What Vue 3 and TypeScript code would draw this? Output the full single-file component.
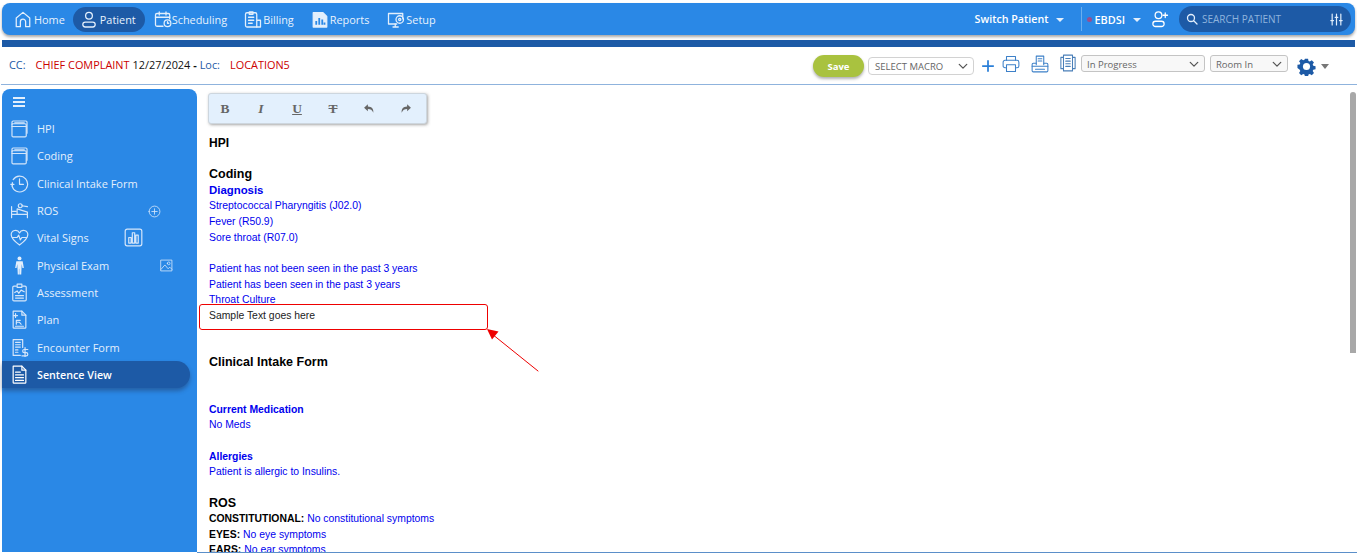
<script setup lang="ts">
type Icon = string[];
const circle = (x: number, y: number, r: number) =>
  `M${x - r} ${y}a${r} ${r} 0 1 0 ${2 * r} 0a${r} ${r} 0 1 0 ${-2 * r} 0z`;

const navItems: { label: string; icon: Icon; active?: boolean }[] = [
  { label: "Home", icon: ["M3 21.5V10l9-7.5 9 7.5v11.5h-5.5V15a3.5 3.5 0 0 0-7 0v6.500z"] },
  { label: "Patient", active: true, icon: [circle(12, 7, 4.5), "M7 15.500h10a3.200 3.200 0 0 1 0 6.500H7a3.200 3.200 0 0 1 0-6.500z"] },
  { label: "Scheduling", icon: ["M21 11V6a2 2 0 0 0-2-2H4a2 2 0 0 0-2 2v13a2 2 0 0 0 2 2h8", "M2 9h19", "M7 2v4M16 2v4", circle(18, 17, 4.500), "M18 15v2h1.800"] },
  { label: "Billing", icon: ["M17 12V5a2 2 0 0 0-2-2H4a2 2 0 0 0-2 2v15a2 2 0 0 0 2 2h13", "M7 2h5v3H7z", "M6 9h7M6 13h7M6 17h5", "M17 13h5v9h-5z"] },
  { label: "Reports", icon: ["M3 3h13l5 5v14H3z", "M7 19v-5M11 19V10M15 19v-7M18 19v-3"] },
  { label: "Setup", icon: ["M21 11V4H2v14h11", "M8 22h7M11 18v4", circle(17, 12, 5), circle(17, 12, 1.500)] },
];

const windowIcon: Icon = ["M3 6h16a1.500 1.500 0 0 1 1.500 1.500V21a1.500 1.500 0 0 1-1.500 1.500H4A1.500 1.500 0 0 1 2.500 21V7", "M2.500 7V4A1.500 1.500 0 0 1 4 2.500h16A1.500 1.500 0 0 1 21.500 4v14", "M2.500 9.500h18", "M6 5h12"];

const sideItems: { label: string; icon: Icon; extra?: string; active?: boolean }[] = [
  { label: "HPI", icon: windowIcon },
  { label: "Coding", icon: windowIcon },
  { label: "Clinical Intake Form", icon: ["M4 7a10 10 0 1 1-1.500 8", "M12 6v7h5", "M1 13h4M3 11v4"] },
  { label: "ROS", extra: "ros", icon: ["M2 7v14M2 17h20v4M22 17v-3L9 10v7", "M3 13h5", circle(13, 6, 2.500), "M15 6l7 1"] },
  { label: "Vital Signs", extra: "vital", icon: ["M12 21.500C6 17 1.500 13 1.500 8.500a5.500 5.500 0 0 1 10.500-2.300 5.500 5.500 0 0 1 10.500 2.300C22.500 13 18 17 12 21.500z", "M3 12h6l2-3 2 6 2-3h6"] },
  { label: "Physical Exam", extra: "exam", icon: [circle(12, 3, 2.500), "M8 6.500h8l1.500 8.500-1.800 0-.9-5-.6 13.500h-2.500v-7.500h-.4v7.500H9.800L9.200 10l-.9 5-1.800 0z"] },
  { label: "Assessment", icon: ["M8 4H5a1.500 1.500 0 0 0-1.500 1.500V21A1.500 1.500 0 0 0 5 22.500h14a1.500 1.500 0 0 0 1.500-1.500V5.500A1.500 1.500 0 0 0 19 4h-3", "M9 1.500h6v4H9z", "M6 12l3-2 2 3 3-4 4 2", "M7 16h10M7 19h10"] },
  { label: "Plan", icon: ["M4 1.500h11l5 5V22a1 1 0 0 1-1 1H5a1 1 0 0 1-1-1z", "M15 1.500v5h5", "M7 4.500v5M4.500 7h5", "M8 13h5M8 13v5M8 15.500h4l2 2.500", "M7 20.500h10"] },
  { label: "Encounter Form", icon: ["M16 12V2H4v20h9", "M7 5.500h6M7 8.500h6M7 11.500h6M7 15h3M7 18h3", "M22.500 14.500H18a1.800 1.800 0 0 0 0 4h2.500a1.800 1.800 0 0 1 0 4H15M19 12v12"] },
  { label: "Sentence View", active: true, icon: ["M4 1.500h11l5 5V22a1 1 0 0 1-1 1H5a1 1 0 0 1-1-1z", "M15 1.500v5h5", "M7 9h6M7 12.500h10M7 16h10M7 19.500h10"] },
];

type Seg = { t: string; c?: string };
type Line = { kind?: string; segs?: Seg[]; text?: string };
const lines: Line[] = [
  { kind: "h2", text: "HPI" },
  {},
  { kind: "h1", text: "Coding" },
  { kind: "sub", text: "Diagnosis" },
  { kind: "link", text: "Streptococcal Pharyngitis (J02.0)" },
  { kind: "link", text: "Fever (R50.9)" },
  { kind: "link", text: "Sore throat (R07.0)" },
  {},
  { kind: "link", text: "Patient has not been seen in the past 3 years" },
  { kind: "link", text: "Patient has been seen in the past 3 years" },
  { kind: "link", text: "Throat Culture" },
  { kind: "plain", text: "Sample Text goes here" },
  {},
  {},
  { kind: "h1", text: "Clinical Intake Form" },
  {},
  {},
  { kind: "sub-s", text: "Current Medication" },
  { kind: "link", text: "No Meds" },
  {},
  { kind: "sub-s", text: "Allergies" },
  { kind: "link", text: "Patient is allergic to Insulins." },
  {},
  { kind: "h1", text: "ROS" },
  { kind: "pair", segs: [{ t: "CONSTITUTIONAL:", c: "lbl" }, { t: " No constitutional symptoms", c: "val" }] },
  { kind: "pair", segs: [{ t: "EYES:", c: "lbl" }, { t: " No eye symptoms", c: "val" }] },
  { kind: "pair", segs: [{ t: "EARS:", c: "lbl" }, { t: " No ear symptoms", c: "val" }] },
];
</script>

<template>
  <div class="page">
    <header class="topbar">
      <nav class="nav">
        <a v-for="n in navItems" :key="n.label" class="nav-item" :class="{ active: n.active }">
          <svg class="nav-icon" viewBox="0 0 24 24"><path v-for="d in n.icon" :key="d" :d="d" /></svg>
          <span>{{ n.label }}</span>
        </a>
      </nav>
      <div class="top-right">
        <span class="switch">Switch Patient</span>
        <i class="caret switch-caret"></i>
        <i class="divider"></i>
        <i class="dot"></i>
        <span class="org">EBDSI</span>
        <i class="caret org-caret"></i>
        <svg class="add-user" viewBox="0 0 24 24">
          <path :d="circle(10, 7, 4.5)" />
          <path d="M6 15h8a3.300 3.300 0 0 1 0 7H6a3.300 3.300 0 0 1 0-7z" />
          <path d="M19 4v6M16 7h6" />
        </svg>
        <div class="search">
          <svg class="search-icon" viewBox="0 0 24 24"><path :d="circle(10, 10, 7)" /><path d="M15.500 15.500L22 22" /></svg>
          <span class="search-text">SEARCH PATIENT</span>
          <svg class="filter-icon" viewBox="0 0 24 24">
            <path d="M4 2v20M12 2v20M20 2v20" />
            <path d="M1.500 14h5M9.500 8h5M17.500 14h5" />
          </svg>
        </div>
      </div>
    </header>

    <div class="strip"></div>

    <section class="subhead">
      <div class="cc">
        <span class="cc-label">CC:</span>
        <span class="cc-red">CHIEF COMPLAINT</span>
        <span class="cc-date">12/27/2024 <b>-</b></span>
        <span class="cc-label">Loc:</span>
        <span class="cc-red loc">LOCATION5</span>
      </div>
      <div class="actions">
        <button class="save">Save</button>
        <div class="select macro"><span>SELECT MACRO</span><svg viewBox="0 0 12 8"><path d="M1.500 1.500L6 6l4.500-4.500" /></svg></div>
        <svg class="act-icon plus" viewBox="0 0 24 24"><path d="M12 2v20M2 12h20" /></svg>
        <svg class="act-icon print" viewBox="0 0 24 24">
          <path d="M6 7V2h12v5" />
          <path d="M6 17H4a2.500 2.500 0 0 1-2.500-2.500V9.500A2.500 2.500 0 0 1 4 7h16a2.500 2.500 0 0 1 2.500 2.500v5A2.500 2.500 0 0 1 20 17h-2" />
          <path d="M6 13h12v9H6z" />
        </svg>
        <svg class="act-icon fax" viewBox="0 0 24 24">
          <path d="M7 13V1.500h10V13" />
          <path d="M9.500 5h5M9.500 8h5" />
          <path d="M7 11H3a1.500 1.500 0 0 0-1.500 1.500V21A1.500 1.500 0 0 0 3 22.500h18a1.500 1.500 0 0 0 1.500-1.500v-8.500A1.500 1.500 0 0 0 21 11h-4" />
          <path d="M1.500 15h21M6 19h12" />
        </svg>
        <svg class="act-icon pages" viewBox="0 0 24 24">
          <path d="M6 1.500h12v21H6z" />
          <path d="M6 4.500H2.500v15H6M18 4.500h3.500v15H18" />
          <path d="M9 6h6M9 9.500h6M9 13h6M9 16.500h6" />
        </svg>
        <div class="select status"><span>In Progress</span><svg viewBox="0 0 12 8"><path d="M1.500 1.500L6 6l4.500-4.500" /></svg></div>
        <div class="select room"><span>Room In</span><svg viewBox="0 0 12 8"><path d="M1.500 1.500L6 6l4.500-4.500" /></svg></div>
        <svg class="gear" viewBox="0 0 24 24">
          <path d="M9.800 1h4.400l.6 3.200 1.900.8 2.700-1.800 3.100 3.100-1.800 2.700.8 1.900 3.200.6v4.400l-3.200.6-.8 1.900 1.800 2.700-3.100 3.100-2.700-1.800-1.900.8-.6 3.200H9.800l-.6-3.200-1.900-.8-2.700 1.800-3.100-3.100 1.800-2.700-.8-1.900L-.7 14V9.700l3.200-.6.8-1.900L1.500 4.500l3.100-3.100 2.700 1.800 1.900-.8z" transform="translate(1.200 1.200) scale(.9)" />
          <path class="gear-hole" :d="circle(12, 12, 4.5)" />
        </svg>
        <i class="caret gear-caret"></i>
      </div>
    </section>

    <main class="body">
      <aside class="sidebar">
        <div class="burger"><i></i><i></i><i></i></div>
        <a v-for="s in sideItems" :key="s.label" class="side-item" :class="{ active: s.active }">
          <svg class="side-icon" viewBox="0 0 24 24"><path v-for="d in s.icon" :key="d" :d="d" /></svg>
          <span>{{ s.label }}</span>
          <svg v-if="s.extra === 'ros'" class="extra ros" viewBox="0 0 24 24"><path :d="circle(12, 12, 10)" /><path d="M12 7v10M7 12h10" /></svg>
          <svg v-if="s.extra === 'vital'" class="extra vital" viewBox="0 0 24 24">
            <path d="M4 1.500h16A2.500 2.500 0 0 1 22.500 4v16a2.500 2.500 0 0 1-2.500 2.500H4A2.500 2.500 0 0 1 1.500 20V4A2.500 2.500 0 0 1 4 1.500z" />
            <path d="M6 12h3v7H6zM10.500 6h3v13h-3zM15 9h3v10h-3z" />
          </svg>
          <svg v-if="s.extra === 'exam'" class="extra exam" viewBox="0 0 24 24">
            <path d="M2 2h20v20H2z" />
            <path d="M2 19l7-8 6 7 3-3 4 4" />
            <path :d="circle(16, 8, 2.500)" />
          </svg>
        </a>
      </aside>

      <div class="content">
        <div class="toolbar">
          <span class="tool bold">B</span>
          <span class="tool ital">I</span>
          <span class="tool under">U</span>
          <span class="tool strike">T</span>
          <svg class="tool-svg" viewBox="0 0 24 24"><path d="M9 4L2 10.500 9 17v-4c5 0 8 1.500 10 7 1-7-2.500-11-10-11.500z" /></svg>
          <svg class="tool-svg" viewBox="0 0 24 24"><path d="M15 4l7 6.500-7 6.500v-4c-5 0-8 1.500-10 7-1-7 2.500-11 10-11.500z" /></svg>
        </div>
        <div class="doc">
          <div v-for="(l, i) in lines" :key="i" class="line" :class="l.kind">
            <template v-if="l.segs"><span v-for="s in l.segs" :key="s.t" :class="s.c">{{ s.t }}</span></template>
            <template v-else>{{ l.text }}</template>
          </div>
        </div>
        <div class="callout"></div>
        <svg class="arrow" viewBox="0 0 60 50">
          <path d="M52 43L6 6" />
          <path class="head" d="M1 1l11.500 2.500-6.500 8z" />
        </svg>
        <div class="scroll-thumb"></div>
      </div>
    </main>
  </div>
</template>

<style>
html, body { margin: 0; background: #fff; }
</style>

<style scoped>
.page {
  width: 1357px;
  height: 556px;
  overflow: hidden;
  position: relative;
  background: #fff;
  font-family: "Open Sans", "Noto Sans", sans-serif;
  box-sizing: border-box;
  padding-top: 3px;
}
svg { display: block; flex: none; }
svg path { fill: none; stroke: currentColor; stroke-width: 1.7; stroke-linejoin: round; stroke-linecap: round; }

.topbar {
  margin: 0 2px;
  height: 32px;
  background: #2a88e6;
  border-radius: 8px;
  box-shadow: 0 2px 3px rgba(60, 60, 60, .45);
  display: flex;
  align-items: center;
  color: #e8f2fd;
  font-size: 10.900px;
}
.nav { display: flex; align-items: center; padding-left: 12px; }
.nav-item { display: flex; align-items: center; height: 25px; gap: 1px; margin-right: 17px; }
.nav-item:first-child { margin-right: 8px; gap: 2px; }
.nav-item.active { background: #1d5aa6; border-radius: 13px; padding: 0 9px 0 7px; margin-right: 9px; gap: 2px; }
.nav-item:nth-child(3) { gap: 0; }
.nav-item:nth-child(5) { margin-right: 18px; }
.nav-icon { width: 18px; height: 19px; color: #e3effc; }
.nav-item:nth-child(5) path:first-child { fill: #e3effc; }
.nav-item:nth-child(5) path:nth-child(2) { stroke: #2a88e6; stroke-width: 2.400; stroke-linecap: butt; }

.top-right { margin-left: auto; display: flex; align-items: center; }
.switch { font-weight: 600; color: #fff; font-size: 10.700px; }
.caret { display: block; width: 0; height: 0; border-left: 4px solid transparent; border-right: 4px solid transparent; border-top: 4.5px solid #e3effc; }
.switch-caret { margin: 1px 0 0 8px; }
.divider { display: block; width: 1px; height: 24px; background: #6aaeee; margin-left: 17px; }
.dot { display: block; width: 5px; height: 5px; border-radius: 50%; background: #9a4f8e; margin-left: 5px; }
.org { margin-left: 2px; font-weight: 600; color: #fff; }
.org-caret { margin: 1px 0 0 8px; }
.add-user { width: 18px; height: 18px; margin-left: 10px; color: #fff; }
.search {
  margin: 0 4px 0 10px;
  width: 172px;
  height: 26px;
  background: #1d5aa6;
  border-radius: 13px;
  display: flex;
  align-items: center;
  box-sizing: border-box;
  padding: 0 8px 0 7px;
  color: #e3effc;
}
.search-icon { width: 12px; height: 12px; }
.search-icon path { stroke-width: 2.600; }
.search-text { margin-left: 4px; font-size: 10px; color: #8fb4dd; }
.filter-icon { margin-left: auto; width: 13px; height: 13px; }
.filter-icon path { stroke-width: 2.200; }

.strip { height: 7px; margin: 5px 2px 0; background: #1d5aa6; }

.subhead {
  height: 37px;
  border-bottom: 1px solid #8fb3dd;
  margin-left: 1px;
  display: flex;
  align-items: flex-start;
}
.cc { display: flex; align-items: center; height: 37px; padding: 0 0 1px 8px; box-sizing: border-box; font-size: 10.900px; line-height: 14px; font-weight: 500; }
.cc-label { color: #1d5aa6; }
.cc-red { color: #cc0000; margin-left: 10px; }
.cc-date { color: #111; margin-left: 3px; margin-right: 3px; }
.loc { margin-left: 10px; }

.actions { margin-left: auto; display: flex; align-items: flex-start; padding-right: 28px; color: #2a7fd8; }
.save {
  margin-top: 8px;
  width: 51px;
  height: 22px;
  border: 0;
  border-radius: 11px;
  background: #a9c23f;
  color: #fff;
  font: 700 9.500px "Open Sans", sans-serif;
  box-shadow: 0 2px 3px rgba(60, 60, 60, .4);
  padding: 0;
}
.select {
  box-sizing: border-box;
  display: flex;
  align-items: center;
  justify-content: space-between;
  border: 1px solid #d2d2d2;
  border-radius: 3px;
  color: #666;
  font-size: 9.500px;
  padding: 0 5px;
  background: #fff;
}
.select svg { width: 10px; height: 7px; color: #555; }
.select svg path { stroke-width: 1.500; }
.macro { width: 106px; height: 18px; margin: 10px 0 0 4px; border-radius: 4px; padding-left: 6px; }
.status { width: 124px; height: 17px; margin: 8px 0 0 4px; background: #f8f8f8; border-color: #c4c4c4; padding-top: 1px; }
.room { width: 78px; height: 17px; margin: 8px 0 0 5px; background: #f8f8f8; border-color: #c4c4c4; padding-top: 1px; }
.act-icon { width: 18px; height: 18px; }
.plus { width: 14px; height: 14px; margin: 12px 0 0 7px; }
.plus path { stroke-width: 3; stroke-linecap: butt; }
.print { margin: 8px 0 0 7px; color: #3d80c8; }
.fax { margin: 8px 0 0 11px; color: #3d80c8; }
.pages { margin: 7px 0 0 10px; color: #4a7fb8; }
.pages path, .fax path, .print path { stroke-width: 1.400; }
.gear { width: 19px; height: 19px; margin: 10px 0 0 9px; color: #1d5aa6; }
.gear path { fill: #1d5aa6; stroke: none; }
.gear path.gear-hole { fill: #fff; }
.gear-caret { margin: 17px 0 0 5px; border-top-color: #777; border-left-width: 4.500px; border-right-width: 4.500px; border-top-width: 5px; }

.body { display: flex; height: 464px; margin-top: 4px; margin-left: 2px; position: relative; }
.sidebar {
  width: 195px;
  height: 463px;
  background: #2a88e6;
  border-radius: 8px 8px 0 0;
  flex: none;
  color: #e3effc;
  font-size: 11px;
}
.burger { height: 25.900px; display: flex; flex-direction: column; justify-content: center; gap: 2.500px; padding-left: 11px; }
.burger i { display: block; width: 12px; height: 1.600px; background: #e3effc; }
.side-item { display: flex; align-items: center; height: 27.330px; padding-left: 8px; box-sizing: border-box; width: 188px; }
.side-item > span { margin-left: 8px; }
.side-icon { width: 19px; height: 19px; color: #d5e6fa; }
.side-icon path { stroke-width: 1.500; }
.side-item:nth-child(7) .side-icon path { fill: #e3effc; stroke: none; }
.side-item.active { background: #1d5aa6; border-radius: 0 14px 14px 0; box-shadow: 0 3px 4px rgba(30, 50, 90, .45); color: #fff; font-weight: 600; font-size: 10.700px; }
.side-item.active .side-icon { color: #fff; }
.extra { margin-left: auto; color: #d5e6fa; }
.extra path { stroke-width: 1.500; }
.ros { width: 13px; height: 13px; margin-right: 29px; margin-top: 2px; }
.vital { width: 19px; height: 19px; margin-right: 47px; }
.exam { width: 13px; height: 13px; margin-right: 17px; }

.content { flex: 1; position: relative; border-bottom: 1px solid #5b8fc9; height: 463px; overflow: hidden; }
.toolbar {
  position: absolute;
  left: 11px;
  top: 4px;
  width: 219px;
  height: 31px;
  box-sizing: border-box;
  background: #e3f0fd;
  border: 1px solid #cdd6de;
  border-radius: 3px;
  box-shadow: 1px 1px 3px rgba(80, 80, 80, .5);
  display: flex;
  align-items: center;
  color: #666;
}
.tool { flex: none; width: 36px; text-align: center; font: 700 13.500px "Liberation Serif", serif; }
.tool:first-child { margin-left: -2px; }
.ital { font-style: italic; }
.under { text-decoration: underline; }
.strike { text-decoration: line-through; }
.tool-svg { width: 13px; height: 13px; margin: 0 11.500px; }
.tool-svg path { fill: currentColor; stroke: none; }

.doc { position: absolute; left: 12px; top: 46.800px; font-family: "Liberation Sans", Arial, sans-serif; font-size: 10.400px; }
.line { height: 15.650px; line-height: 15.650px; white-space: pre; color: #0000ee; }
.h2 { font-size: 12px; font-weight: 700; color: #000; }
.h1 { font-size: 12.500px; font-weight: 700; color: #000; }
.sub { font-size: 11.400px; font-weight: 700; }
.sub-s { font-weight: 700; }
.plain { color: #222; }
.lbl { color: #000; font-weight: 700; }
.val { color: #0000ee; }

.callout { position: absolute; left: 2px; top: 215px; width: 289px; height: 26px; box-sizing: border-box; border: 1px solid #ee0000; border-radius: 3px; }
.arrow { position: absolute; left: 289px; top: 239px; width: 60px; height: 50px; color: #ee0000; overflow: visible; }
.arrow path { stroke-width: 1; }
.arrow path.head { fill: #ee0000; stroke: none; }
.scroll-thumb { position: absolute; right: 1px; top: 3px; width: 6px; height: 261px; background: #a8a8a8; border-radius: 4px 4px 0 0; }
</style>
